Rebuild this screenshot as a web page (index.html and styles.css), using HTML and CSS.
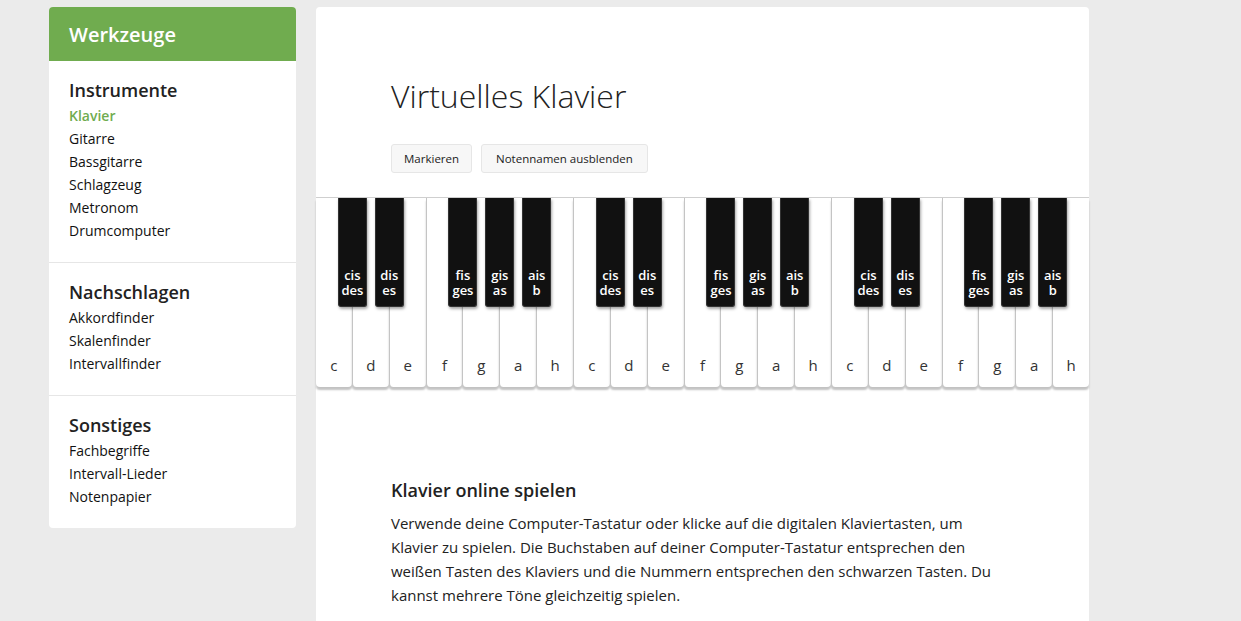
FILE: index.html
```html
<!DOCTYPE html>
<html lang="de">
<head>
<meta charset="utf-8">
<title>Virtuelles Klavier</title>
<link rel="stylesheet" href="styles.css">
</head>
<body>
<div class="page">
  <aside class="sidebar">
    <div class="sidebar-head">Werkzeuge</div>
    <section class="side-section">
      <h3 class="side-title">Instrumente</h3>
      <a class="side-link active">Klavier</a>
      <a class="side-link">Gitarre</a>
      <a class="side-link">Bassgitarre</a>
      <a class="side-link">Schlagzeug</a>
      <a class="side-link">Metronom</a>
      <a class="side-link">Drumcomputer</a>
    </section>
    <section class="side-section">
      <h3 class="side-title">Nachschlagen</h3>
      <a class="side-link">Akkordfinder</a>
      <a class="side-link">Skalenfinder</a>
      <a class="side-link">Intervallfinder</a>
    </section>
    <section class="side-section">
      <h3 class="side-title">Sonstiges</h3>
      <a class="side-link">Fachbegriffe</a>
      <a class="side-link">Intervall-Lieder</a>
      <a class="side-link">Notenpapier</a>
    </section>
  </aside>
  <main class="main">
    <div class="content">
      <h1 class="title">Virtuelles Klavier</h1>
      <div class="buttons">
        <button class="btn btn-mark">Markieren</button>
        <button class="btn">Notennamen ausblenden</button>
      </div>
    </div>
    <div class="piano">
      <div class="white"><span class="wlabel">c</span><div class="black"><span>cis</span><span>des</span></div></div>
      <div class="white"><span class="wlabel">d</span><div class="black"><span>dis</span><span>es</span></div></div>
      <div class="white"><span class="wlabel">e</span></div>
      <div class="white"><span class="wlabel">f</span><div class="black"><span>fis</span><span>ges</span></div></div>
      <div class="white"><span class="wlabel">g</span><div class="black"><span>gis</span><span>as</span></div></div>
      <div class="white"><span class="wlabel">a</span><div class="black"><span>ais</span><span>b</span></div></div>
      <div class="white"><span class="wlabel">h</span></div>
      <div class="white"><span class="wlabel">c</span><div class="black"><span>cis</span><span>des</span></div></div>
      <div class="white"><span class="wlabel">d</span><div class="black"><span>dis</span><span>es</span></div></div>
      <div class="white"><span class="wlabel">e</span></div>
      <div class="white"><span class="wlabel">f</span><div class="black"><span>fis</span><span>ges</span></div></div>
      <div class="white"><span class="wlabel">g</span><div class="black"><span>gis</span><span>as</span></div></div>
      <div class="white"><span class="wlabel">a</span><div class="black"><span>ais</span><span>b</span></div></div>
      <div class="white"><span class="wlabel">h</span></div>
      <div class="white"><span class="wlabel">c</span><div class="black"><span>cis</span><span>des</span></div></div>
      <div class="white"><span class="wlabel">d</span><div class="black"><span>dis</span><span>es</span></div></div>
      <div class="white"><span class="wlabel">e</span></div>
      <div class="white"><span class="wlabel">f</span><div class="black"><span>fis</span><span>ges</span></div></div>
      <div class="white"><span class="wlabel">g</span><div class="black"><span>gis</span><span>as</span></div></div>
      <div class="white"><span class="wlabel">a</span><div class="black"><span>ais</span><span>b</span></div></div>
      <div class="white"><span class="wlabel">h</span></div>
    </div>
    <div class="content text">
      <h2 class="subtitle">Klavier online spielen</h2>
      <p class="para">Verwende deine Computer-Tastatur oder klicke auf die digitalen Klaviertasten, um Klavier zu spielen. Die Buchstaben auf deiner Computer-Tastatur entsprechen den weißen Tasten des Klaviers und die Nummern entsprechen den schwarzen Tasten. Du kannst mehrere Töne gleichzeitig spielen.</p>
    </div>
  </main>
</div>
</body>
</html>
```

FILE: styles.css
```css
* { box-sizing: border-box; }
html, body { margin: 0; padding: 0; }
body {
  background: #ebebeb;
  font-family: "Open Sans", "DejaVu Sans", sans-serif;
  color: #222;
  height: 621px;
  overflow: hidden;
}
.page {
  display: flex;
  align-items: flex-start;
  gap: 20px;
  padding: 7px 0 0 49px;
}
.sidebar {
  width: 247px;
  flex: none;
  background: #fff;
  border-radius: 4px;
  overflow: hidden;
}
.sidebar-head {
  background: #70ac4f;
  color: #fff;
  font-size: 20px;
  font-weight: 600;
  height: 54px;
  line-height: 54px;
  padding: 1px 0 0 20px;
}
.side-section {
  display: flex;
  flex-direction: column;
  padding: 16px 20px 20px;
  border-top: 1px solid #e6e6e6;
}
.side-section:first-of-type { border-top: none; }
.side-title {
  margin: 0 0 1px;
  font-size: 18px;
  font-weight: 600;
  line-height: 26px;
  color: #222;
}
.side-link {
  font-size: 14px;
  line-height: 23px;
  color: #111;
}
.side-link.active {
  color: #70ac4f;
  font-weight: 600;
}
.main {
  width: 773px;
  flex: none;
  background: #fff;
  border-radius: 4px 4px 0 0;
  min-height: 640px;
}
.content { padding: 67px 75px 0; }
.title {
  margin: 0;
  font-size: 32px;
  font-weight: 300;
  line-height: 44px;
  color: #222;
}
.buttons {
  display: flex;
  gap: 9px;
  margin-top: 26px;
}
.btn {
  font-family: "Open Sans", "DejaVu Sans", sans-serif;
  font-size: 11.5px;
  height: 29px;
  padding: 0 14px;
  background: #f7f7f7;
  border: 1px solid #e6e6e6;
  border-radius: 3px;
  color: #222;
}
.btn-mark { padding: 0 12px; }
.piano {
  margin-top: 24px;
  display: flex;
  border-top: 1px solid #cfcfcf;
  height: 190px;
}
.white {
  position: relative;
  flex: 1;
  display: flex;
  align-items: flex-end;
  justify-content: center;
  border-left: 1px solid #c4c4c4;
  border-radius: 0 0 4px 4px;
  box-shadow: 0 3px 2px rgba(0,0,0,0.24);
  background: #fff;
  padding-bottom: 12px;
}
.white:first-child { border-left: none; }
.wlabel {
  font-size: 15px;
  line-height: 20px;
  color: #333;
}
.black {
  position: absolute;
  top: 0;
  right: -15px;
  width: 29px;
  height: 109px;
  z-index: 2;
  background: #111;
  border: 1px solid #333;
  border-top: none;
  border-radius: 0 0 3px 3px;
  box-shadow: 1px 2px 3px rgba(0,0,0,0.35);
  display: flex;
  flex-direction: column;
  justify-content: flex-end;
  align-items: center;
  padding-bottom: 8px;
  color: #fff;
  font-size: 13px;
  font-weight: 600;
  line-height: 15px;
}
.text { padding-top: 91px; }
.subtitle {
  margin: 0;
  font-size: 18px;
  font-weight: 600;
  line-height: 25px;
  color: #222;
}
.para {
  margin: 8px 0 0;
  font-size: 15px;
  line-height: 24px;
  color: #222;
  max-width: 610px;
}
```
